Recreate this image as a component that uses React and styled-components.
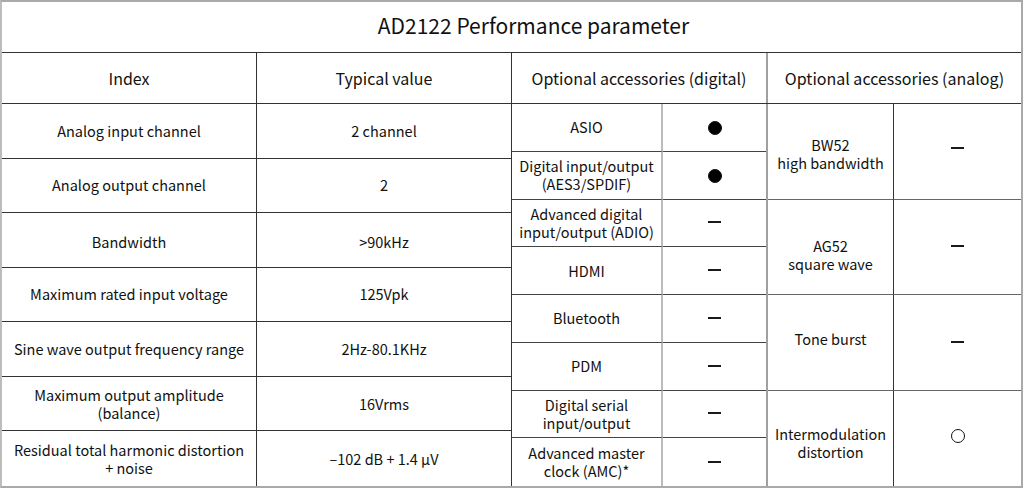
import React from "react";
import styled, { createGlobalStyle } from "styled-components";

const Global = createGlobalStyle`
  html, body { margin: 0; padding: 0; background: #fff; }
  * { box-sizing: border-box; }
  body { font-family: "Noto Sans CJK SC", "Noto Sans", sans-serif; color: #111; }
`;

const Table = styled.div`
  width: 1023px;
  border-left: 2px solid #bdbdbd;
  border-top: 2px solid #a9a9a9;
  border-right: 2px solid #a9a9a9;
  border-bottom: 2px solid #a9a9a9;
  background: #fff;
`;

const Title = styled.div`
  height: 51px;
  border-bottom: 1px solid #333;
  display: flex;
  align-items: center;
  justify-content: center;
  font-size: 21px;
  padding: 0 0 4px 44px;
`;

const Header = styled.div`
  display: grid;
  grid-template-columns: 255px 255px 256px 1fr;
  height: 51px;
  border-bottom: 1px solid #333;
`;

const HeadCell = styled.div`
  display: flex;
  align-items: center;
  justify-content: center;
  font-size: 16px;
  border-right: ${(p) => (p.$edge ? "none" : `${p.$bw || 1}px solid ${p.$bc || "#333"}`)};
`;

const Body = styled.div`
  display: flex;
  height: 382px;
`;

const Group = styled.div`
  display: grid;
  width: ${(p) => p.$w};
  flex: ${(p) => (p.$grow ? 1 : "none")};
  grid-template-columns: ${(p) => p.$cols};
  grid-template-rows: repeat(${(p) => p.$rows}, 1fr);
  border-right: ${(p) => (p.$sep ? p.$sep : "none")};
`;

const Cell = styled.div`
  display: flex;
  align-items: center;
  justify-content: center;
  text-align: center;
  font-size: 14.5px;
  line-height: 18px;
  padding: 0 4px;
  grid-row: ${(p) => (p.$span ? `span ${p.$span}` : "auto")};
  border-bottom: ${(p) => (p.$last ? "none" : `1px solid ${p.$hc || "#333"}`)};
  border-right: ${(p) => (p.$vr ? p.$vr : "none")};
`;

const Text = styled.div`
  position: relative;
  top: ${(p) => p.$dy || 0}px;
`;

const Dot = styled.span`
  display: block;
  width: 14px;
  height: 14px;
  border-radius: 50%;
  background: ${(p) => (p.$hollow ? "#fff" : "#000")};
  border: 1px solid #111;
  margin-top: ${(p) => (p.$hollow ? "-4px" : "1px")};
`;

const Dash = styled.span`
  display: block;
  width: 13px;
  height: 2px;
  background: #1a1a1a;
  margin-top: -1px;
`;

const leftRows = [
  ["Analog input channel", "2 channel"],
  ["Analog output channel", "2"],
  ["Bandwidth", ">90kHz", 2],
  ["Maximum rated input voltage", "125Vpk"],
  ["Sine wave output frequency range", "2Hz-80.1KHz"],
  ["Maximum output amplitude\n(balance)", "16Vrms"],
  ["Residual total harmonic distortion\n+ noise", "\u2013102 dB + 1.4 \u00b5V"],
];

const digitalRows = [
  ["ASIO", "dot"],
  ["Digital input/output\n(AES3/SPDIF)", "dot"],
  ["Advanced digital\ninput/output (ADIO)", "dash"],
  ["HDMI", "dash"],
  ["Bluetooth", "dash"],
  ["PDM", "dash"],
  ["Digital serial\ninput/output", "dash"],
  ["Advanced master\nclock (AMC)*", "dash"],
];

const analogRows = [
  ["BW52\nhigh bandwidth", "dash", 3, -3],
  ["AG52\nsquare wave", "dash", 8, 0],
  ["Tone burst", "dash", -3, 0],
  ["Intermodulation\ndistortion", "ring", 5, 0],
];

const Lines = ({ text }) =>
  text.split("\n").map((l, i, a) => (
    <React.Fragment key={i}>
      {l}
      {i < a.length - 1 && <br />}
    </React.Fragment>
  ));

const Mark = ({ kind }) =>
  kind === "dot" ? <Dot /> : kind === "ring" ? <Dot $hollow /> : <Dash />;

export default function App() {
  return (
    <>
      <Global />
      <Table>
        <Title>AD2122 Performance parameter</Title>
        <Header>
          <HeadCell>Index</HeadCell>
          <HeadCell>Typical value</HeadCell>
          <HeadCell $bw={2} $bc="#a0a0a0">Optional accessories (digital)</HeadCell>
          <HeadCell $edge>Optional accessories (analog)</HeadCell>
        </Header>
        <Body>
          <Group $w="510px" $cols="255px 1fr" $rows={7} $sep="1px solid #333">
            {leftRows.map(([a, b, dy], i) => (
              <React.Fragment key={i}>
                <Cell $last={i === leftRows.length - 1} $vr="1px solid #333">
                  <Text $dy={dy}>
                    <Lines text={a} />
                  </Text>
                </Cell>
                <Cell $last={i === leftRows.length - 1}>
                  <Text $dy={dy}>{b}</Text>
                </Cell>
              </React.Fragment>
            ))}
          </Group>
          <Group $w="256px" $cols="151px 1fr" $rows={8} $sep="2px solid #a0a0a0">
            {digitalRows.map(([a, k], i) => (
              <React.Fragment key={i}>
                <Cell $last={i === digitalRows.length - 1} $hc="#444" $vr="2px solid #bbbbbb">
                  <Text>
                    <Lines text={a} />
                  </Text>
                </Cell>
                <Cell $last={i === digitalRows.length - 1} $hc="#444">
                  <Mark kind={k} />
                </Cell>
              </React.Fragment>
            ))}
          </Group>
          <Group $grow $cols="126px 1fr" $rows={8}>
            {analogRows.map(([a, k, dy, mdy], i) => (
              <React.Fragment key={i}>
                <Cell $span={2} $last={i === analogRows.length - 1} $hc="#666" $vr="1px solid #333">
                  <Text $dy={dy}>
                    <Lines text={a} />
                  </Text>
                </Cell>
                <Cell $span={2} $last={i === analogRows.length - 1} $hc="#666">
                  <Text $dy={mdy}>
                    <Mark kind={k} />
                  </Text>
                </Cell>
              </React.Fragment>
            ))}
          </Group>
        </Body>
      </Table>
    </>
  );
}
